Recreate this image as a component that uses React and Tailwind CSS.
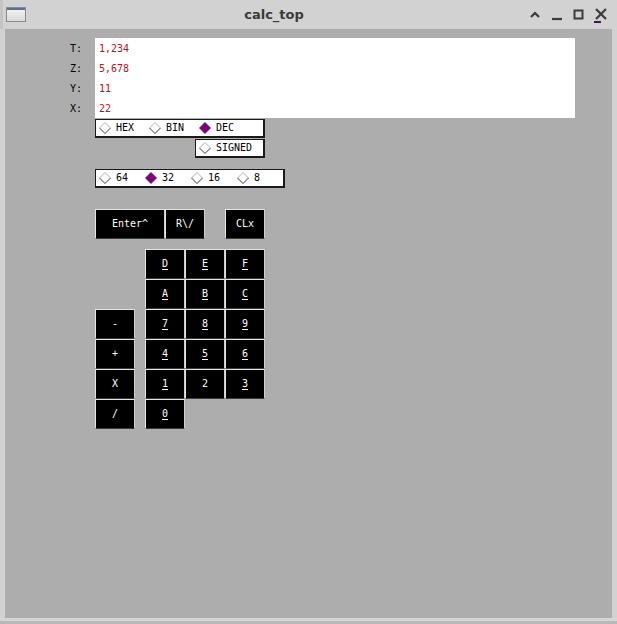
import React from "react";

const mono = { fontFamily: '"DejaVu Sans Mono", "Liberation Mono", monospace' };

function Diamond({ on }) {
  return (
    <svg width="12" height="12" viewBox="0 0 12 12" className="shrink-0">
      {on ? (
        <polygon points="6,0.5 11.5,6 6,11.5 0.5,6" fill="#800080" stroke="#5a005a" strokeWidth="0.8" />
      ) : (
        <g fill="none" strokeWidth="1">
          <polyline points="0.5,6 6,0.5 11.5,6" stroke="#b0b0b0" />
          <polyline points="0.5,6 6,11.5 11.5,6" stroke="#3a3a3a" />
        </g>
      )}
    </svg>
  );
}

function RadioItem({ label, on }) {
  return (
    <div className="flex items-center gap-[5px] w-[50px]">
      <Diamond on={on} />
      <span className="text-[10px] leading-none text-black">{label}</span>
    </div>
  );
}

function Btn({ children, w = "w-[40px]", className = "" }) {
  return (
    <div
      className={`${w} h-[30px] bg-black border border-t-[#e4e4e4] border-l-[#e4e4e4] border-r-[#cfcfcf] border-b-[#3c3c3c] flex items-center justify-center text-white text-[10px] leading-none ${className}`}
    >
      {children}
    </div>
  );
}

const U = ({ c }) => <span className="underline underline-offset-2">{c}</span>;

export default function App() {
  const rows = [
    ["T:", "1,234"],
    ["Z:", "5,678"],
    ["Y:", "11"],
    ["X:", "22"],
  ];
  return (
    <div className="w-[617px] h-[624px] bg-[#d2d2d2] flex flex-col overflow-hidden" style={mono}>
      {/* title bar */}
      <div className="h-[29px] flex items-center shrink-0 border-l-[3px] border-[#c4c4c4]">
        <div className="ml-[3px] w-[20px] h-[15px] border border-[#8a8a8a] bg-gradient-to-b from-[#f4f4f4] to-[#dadada] flex flex-col">
          <div className="h-[2px] bg-[#5a6f95]" />
        </div>
        <div
          className="flex-1 text-center text-[13px] font-bold text-[#3a3a3a] pr-[6px]"
          style={{ fontFamily: '"DejaVu Sans", "Liberation Sans", sans-serif' }}
        >
          calc_top
        </div>
        <div className="flex items-center gap-[8px] mr-[9px]">
          <svg width="14" height="14" viewBox="0 0 14 14">
            <polyline points="3,9 7,5 11,9" fill="none" stroke="#3a3a3a" strokeWidth="2.2" />
          </svg>
          <svg width="14" height="14" viewBox="0 0 14 14">
            <line x1="2" y1="11" x2="12" y2="11" stroke="#3a3a3a" strokeWidth="2.2" />
          </svg>
          <svg width="14" height="14" viewBox="0 0 14 14">
            <rect x="2.5" y="2.5" width="8" height="8" fill="none" stroke="#3a3a3a" strokeWidth="2" />
          </svg>
          <svg width="14" height="16" viewBox="0 0 14 16">
            <line x1="2" y1="2" x2="12" y2="12" stroke="#3a3a3a" strokeWidth="2.2" />
            <line x1="12" y1="2" x2="2" y2="12" stroke="#3a3a3a" strokeWidth="2.2" />
            <line x1="0" y1="15" x2="7" y2="15" stroke="#3a1a5a" strokeWidth="2" />
          </svg>
        </div>
      </div>

      {/* content */}
      <div className="ml-[5px] w-[607px] h-[589px] bg-[#adadad] shrink-0 pt-[9px] flex flex-col">
        <div className="flex">
          <div className="w-[90px] flex flex-col">
            {rows.map(([l]) => (
              <div key={l} className="h-[20px] flex items-center pl-[65px] text-[10px] text-black">
                {l}
              </div>
            ))}
          </div>
          <div className="w-[480px] h-[80px] bg-white flex flex-col">
            {rows.map(([l, v]) => (
              <div key={l} className="h-[20px] flex items-center pl-[4px] text-[10px] text-[#c0101a]">
                {v}
              </div>
            ))}
          </div>
        </div>

        <div className="ml-[90px] mt-[1px] w-[170px] h-[19px] bg-white border border-[#1a1a1a] border-b-[2px] border-r-[2px] flex items-center pl-[3px]">
          <RadioItem label="HEX" />
          <RadioItem label="BIN" />
          <RadioItem label="DEC" on />
        </div>
        <div className="ml-[190px] mt-[1px] w-[70px] h-[19px] bg-white border border-[#1a1a1a] border-b-[2px] border-r-[2px] flex items-center pl-[3px]">
          <div className="flex items-center gap-[5px]">
            <Diamond />
            <span className="text-[10px] leading-none text-black">SIGNED</span>
          </div>
        </div>

        <div className="ml-[90px] mt-[11px] w-[190px] h-[19px] bg-white border border-[#1a1a1a] border-b-[2px] border-r-[2px] flex items-center pl-[3px]">
          <RadioItem label="64" />
          <RadioItem label="32" on />
          <RadioItem label="16" />
          <RadioItem label="8" />
        </div>

        <div className="ml-[90px] mt-[21px] flex">
          <Btn w="w-[70px]">Enter^</Btn>
          <Btn>R\/</Btn>
          <Btn className="ml-[20px]">CLx</Btn>
        </div>

        <div className="ml-[90px] mt-[10px] grid grid-cols-[40px_10px_40px_40px_40px] grid-rows-[repeat(6,30px)]">
          <Btn className="col-start-3"><U c="D" /></Btn>
          <Btn><U c="E" /></Btn>
          <Btn><U c="F" /></Btn>

          <Btn className="col-start-3"><U c="A" /></Btn>
          <Btn><U c="B" /></Btn>
          <Btn><U c="C" /></Btn>

          <Btn>-</Btn>
          <Btn className="col-start-3"><U c="7" /></Btn>
          <Btn><U c="8" /></Btn>
          <Btn><U c="9" /></Btn>

          <Btn>+</Btn>
          <Btn className="col-start-3"><U c="4" /></Btn>
          <Btn><U c="5" /></Btn>
          <Btn><U c="6" /></Btn>

          <Btn>X</Btn>
          <Btn className="col-start-3"><U c="1" /></Btn>
          <Btn>2</Btn>
          <Btn><U c="3" /></Btn>

          <Btn>/</Btn>
          <Btn className="col-start-3"><U c="0" /></Btn>
        </div>
      </div>
      <div className="h-[3px] bg-[#d6d6d6] shrink-0" />
      <div className="flex-1 bg-[#b8b8b8]" />
    </div>
  );
}
